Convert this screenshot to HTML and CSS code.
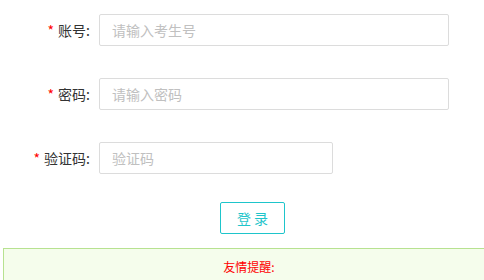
FILE: index.html
```html
<!DOCTYPE html>
<html lang="zh-CN">
<head>
<meta charset="utf-8">
<title>登录</title>
<link rel="stylesheet" href="styles.css">
</head>
<body>
<form class="login-form">
  <div class="form-row">
    <label class="form-label"><span class="req">*</span>账号:</label>
    <input class="form-input" type="text" placeholder="请输入考生号">
  </div>
  <div class="form-row">
    <label class="form-label"><span class="req">*</span>密码:</label>
    <input class="form-input" type="password" placeholder="请输入密码">
  </div>
  <div class="form-row">
    <label class="form-label"><span class="req">*</span>验证码:</label>
    <input class="form-input short" type="text" placeholder="验证码">
  </div>
  <div class="btn-row">
    <button type="button" class="login-btn">登 录</button>
  </div>
</form>
<div class="tips">
  <p class="tips-title">友情提醒:</p>
</div>
</body>
</html>
```

FILE: styles.css
```css
html, body {
  margin: 0;
  padding: 0;
  background: #fff;
}
body {
  font-family: "Noto Sans CJK SC", "Microsoft YaHei", sans-serif;
  font-size: 14px;
  color: #333;
}
.login-form {
  padding-top: 14px;
}
.form-row {
  display: flex;
  align-items: center;
  height: 32px;
  margin-bottom: 32px;
}
.form-row:nth-child(3) {
  margin-bottom: 28px;
}
.form-label {
  width: 90px;
  padding-right: 9px;
  text-align: right;
  font-size: 14px;
  color: #333;
  line-height: 32px;
}
.req {
  color: #f00;
  margin-right: 4px;
}
.form-input {
  box-sizing: border-box;
  width: 350px;
  height: 32px;
  margin: 0;
  padding: 0 12px;
  border: 1px solid #dcdcdc;
  border-radius: 2px;
  font-family: inherit;
  font-size: 14px;
  color: #333;
  outline: none;
}
.form-input.short {
  width: 234px;
}
.form-input::placeholder {
  color: #c0c0c0;
}
.btn-row {
  padding-left: 220px;
  height: 32px;
  margin-bottom: 14px;
}
.login-btn {
  box-sizing: border-box;
  width: 65px;
  height: 32px;
  margin: 0;
  padding: 0;
  background: #fff;
  border: 1px solid #1ec5cb;
  border-radius: 2px;
  color: #1ec5cb;
  font-family: inherit;
  font-size: 14px;
  cursor: pointer;
}
.tips {
  margin: 0 0 0 3px;
  background: #f5fdec;
  border: 1px solid #b7e290;
  border-right: none;
  padding: 9px 0 10px 10px;
  text-align: center;
}
.tips-title {
  margin: 0;
  font-size: 12px;
  line-height: 18px;
  color: #f00;
}
```
